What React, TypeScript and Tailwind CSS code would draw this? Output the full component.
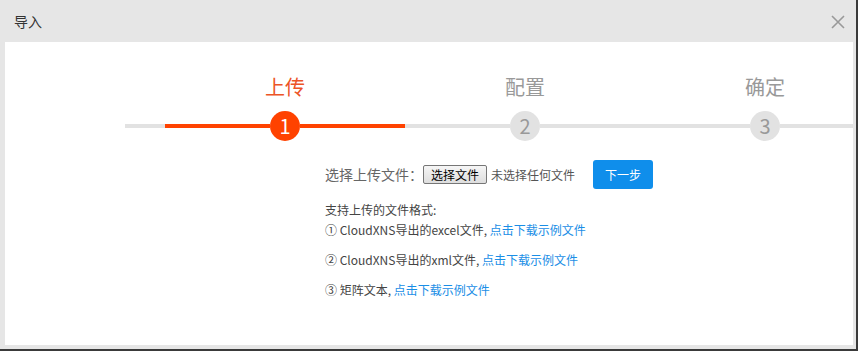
import React from "react";

const steps = ["上传", "配置", "确定"];
const active = 0;

const font = { fontFamily: '"Microsoft YaHei", "Noto Sans CJK SC", "Noto Sans", sans-serif' };

const App: React.FC = () => {
  return (
    <div className="w-[859px] h-[351px] bg-white" style={font}>
      <div className="w-[858px] h-[351px] flex flex-col bg-[#e6e6e6] border-r-2 border-b-2 border-[#3a3a3a]">
        {/* header */}
        <div className="h-[42px] shrink-0 flex items-center justify-between pl-[14px] pr-[11px]">
          <span className="text-[14px] text-[#333] pt-[1px]">导入</span>
          <button className="w-[14px] h-[14px] flex items-center justify-center mt-[1px]">
            <svg width="14" height="14" viewBox="0 0 14 14">
              <path d="M1 1L13 13M13 1L1 13" stroke="#999" strokeWidth="1.6" fill="none" />
            </svg>
          </button>
        </div>

        {/* body */}
        <div className="flex-1 ml-[5px] mr-[3px] mb-[4px] bg-white overflow-hidden pt-[33px]">
          <div className="flex pl-[160px]">
            {steps.map((s, i) => (
              <div key={s} className="w-[240px] shrink-0 flex flex-col items-center">
                <div
                  className={
                    "h-[24px] text-[20px] leading-[24px] " + (i === active ? "text-[#ec5426]" : "text-[#999]")
                  }
                >
                  {s}
                </div>
              </div>
            ))}
          </div>

          <div className="flex items-center mt-[12px] pl-[120px]">
            <div className="w-[40px] h-[4px] bg-[#e2e2e2] shrink-0" />
            {steps.map((s, i) => (
              <div key={s} className="w-[240px] shrink-0 flex items-center">
                <div className={"flex-1 h-[4px] " + (i === active ? "bg-[#ff4200]" : "bg-[#e2e2e2]")} />
                <div
                  className={
                    "w-[30px] h-[30px] rounded-full flex items-center justify-center text-[20px] " +
                    (i === active ? "bg-[#ff4200] text-white" : "bg-[#e2e2e2] text-[#999]")
                  }
                >
                  {i + 1}
                </div>
                <div className={"flex-1 h-[4px] " + (i === active ? "bg-[#ff4200]" : "bg-[#e2e2e2]")} />
              </div>
            ))}
          </div>

          <div className="pl-[320px] mt-[19px]">
            <div className="flex items-center h-[29px]">
              <span className="text-[14px] text-[#666]">选择上传文件</span>
              <span className="text-[14px] text-[#666] w-[12px]">：</span>
              <button className="ml-[2px] h-[19px] w-[64px] text-[12px] leading-[17px] text-black border border-[#767676] rounded-[2px] bg-gradient-to-b from-[#f6f6f6] to-[#dedede]">
                选择文件
              </button>
              <span className="ml-[4px] text-[12px] text-[#555]">未选择任何文件</span>
              <button className="ml-[18px] h-[29px] w-[60px] rounded-[3px] bg-[#0f8eeb] text-white text-[12px]">
                下一步
              </button>
            </div>

            <div className="mt-[11px] text-[12px] text-[#444] leading-[20px]">
              <p>支持上传的文件格式:</p>
              <p className="mb-[10px]">
                ① CloudXNS导出的excel文件, <a className="text-[#1a8ee6] cursor-pointer">点击下载示例文件</a>
              </p>
              <p className="mb-[10px]">
                ② CloudXNS导出的xml文件, <a className="text-[#1a8ee6] cursor-pointer">点击下载示例文件</a>
              </p>
              <p>
                ③ 矩阵文本, <a className="text-[#1a8ee6] cursor-pointer">点击下载示例文件</a>
              </p>
            </div>
          </div>
        </div>
      </div>
    </div>
  );
};

export default App;
